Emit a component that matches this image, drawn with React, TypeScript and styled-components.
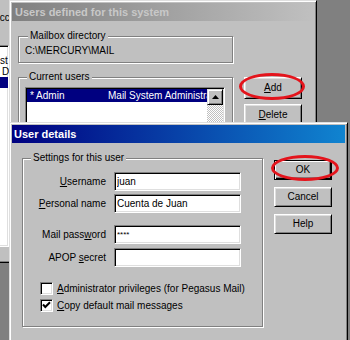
import styled, { createGlobalStyle } from "styled-components";

const GlobalStyle = createGlobalStyle`
  html, body {
    margin: 0;
    padding: 0;
    background: #808080;
  }
  #root {
    width: 350px;
    height: 340px;
  }
`;

const Desktop = styled.div`
  position: relative;
  width: 350px;
  height: 340px;
  overflow: hidden;
  background: #808080;
  font-family: "Liberation Sans", Arial, sans-serif;
  font-size: 10px;
  line-height: 12px;
  color: #000;
`;

const Window = styled.div<{ $x: number; $y: number; $w: number; $h: number }>`
  position: absolute;
  left: ${(p) => p.$x}px;
  top: ${(p) => p.$y}px;
  width: ${(p) => p.$w}px;
  height: ${(p) => p.$h}px;
  box-sizing: border-box;
  display: flex;
  flex-direction: column;
  padding: 2px;
  background: #c0c0c0;
  border: 1px solid;
  border-color: #dfdfdf #000 #000 #dfdfdf;
  box-shadow: inset 1px 1px #fff, inset -1px -1px #808080;
`;

const TitleBar = styled.div<{ $active?: boolean; $indent: number }>`
  flex: none;
  height: 18px;
  display: flex;
  align-items: center;
  padding-left: ${(p) => p.$indent}px;
  font-size: 11px;
  font-weight: bold;
  white-space: nowrap;
  color: ${(p) => (p.$active ? "#fff" : "#c8c8c8")};
  background: ${(p) =>
    p.$active
      ? "linear-gradient(90deg, #000080, #1084d0)"
      : "linear-gradient(90deg, #808080, #c0c0c0)"};
`;

const DialogBody = styled.div<{ $pad: string; $gap: number }>`
  display: flex;
  align-items: flex-start;
  gap: ${(p) => p.$gap}px;
  padding: ${(p) => p.$pad};
`;

const Column = styled.div<{ $w: number }>`
  display: flex;
  flex-direction: column;
  width: ${(p) => p.$w}px;
  flex: none;
`;

const ButtonColumn = styled.div<{ $top: number; $gap: number }>`
  display: flex;
  flex-direction: column;
  gap: ${(p) => p.$gap}px;
  padding-top: ${(p) => p.$top}px;
`;

const Group = styled.fieldset<{ $pad: string; $top?: number }>`
  margin: ${(p) => p.$top ?? 0}px 0 0 0;
  padding: ${(p) => p.$pad};
  min-width: 0;
  box-sizing: border-box;
  border: 1px solid #808080;
  box-shadow: inset 1px 1px #fff, 1px 1px #fff;
`;

const Legend = styled.legend<{ $offset: number }>`
  margin-left: ${(p) => p.$offset}px;
  padding: 0 2px;
  line-height: 12px;
  background: #c0c0c0;
`;

const PathText = styled.div`
  white-space: nowrap;
`;

const ListBox = styled.div`
  display: flex;
  height: 60px;
  box-sizing: border-box;
  padding: 1px;
  background: #fff;
  border: 1px solid;
  border-color: #808080 #fff #fff #808080;
  box-shadow: inset 1px 1px #000, inset -1px -1px #dfdfdf;
`;

const ListRows = styled.div`
  flex: 1;
  min-width: 0;
  overflow: hidden;
`;

const ListRow = styled.div<{ $selected?: boolean }>`
  display: grid;
  grid-template-columns: 81px 1fr;
  height: 13px;
  line-height: 13px;
  white-space: nowrap;
  overflow: hidden;
  background: ${(p) => (p.$selected ? "#000080" : "transparent")};
  color: ${(p) => (p.$selected ? "#fff" : "#000")};
`;

const ListCell = styled.span<{ $indent?: number }>`
  padding-left: ${(p) => p.$indent ?? 0}px;
  overflow: hidden;
`;

const ScrollBar = styled.div`
  width: 16px;
  flex: none;
  display: flex;
  flex-direction: column;
`;

const ScrollButton = styled.div`
  height: 16px;
  box-sizing: border-box;
  display: flex;
  align-items: center;
  justify-content: center;
  background: #c0c0c0;
  border: 1px solid;
  border-color: #dfdfdf #000 #000 #dfdfdf;
  box-shadow: inset 1px 1px #fff, inset -1px -1px #808080;
`;

const ScrollTrack = styled.div`
  flex: 1;
  background: repeating-conic-gradient(#fff 0 25%, #c0c0c0 0 50%) 0 0 / 2px 2px;
`;

const Button = styled.div<{ $h: number; $default?: boolean }>`
  position: relative;
  width: 58px;
  height: ${(p) => p.$h}px;
  box-sizing: border-box;
  display: flex;
  align-items: center;
  justify-content: center;
  background: #c0c0c0;
  border: 1px solid;
  border-color: ${(p) => (p.$default ? "#000" : "#fff #000 #000 #fff")};
  box-shadow: ${(p) =>
    p.$default
      ? "inset 1px 1px #fff, inset -1px -1px #000, inset -2px -2px #808080"
      : "inset 1px 1px #dfdfdf, inset -1px -1px #808080"};
  white-space: nowrap;
`;

const RedRing = styled.span<{ $l: number; $t: number; $r: number; $b: number }>`
  position: absolute;
  left: ${(p) => p.$l}px;
  top: ${(p) => p.$t}px;
  right: ${(p) => p.$r}px;
  bottom: ${(p) => p.$b}px;
  border: 3px solid #e4141c;
  border-radius: 50%;
  pointer-events: none;
`;

const FieldGrid = styled.div<{ $top: number; $gap: number }>`
  display: grid;
  grid-template-columns: 75px 127px;
  grid-auto-rows: 19px;
  column-gap: 8px;
  row-gap: ${(p) => p.$gap}px;
  margin-top: ${(p) => p.$top}px;
  align-items: center;
`;

const FieldLabel = styled.label`
  text-align: right;
  white-space: nowrap;
`;

const TextBox = styled.input<{ $masked?: boolean }>`
  width: 100%;
  height: 19px;
  box-sizing: border-box;
  margin: 0;
  padding: 0 2px;
  font: inherit;
  font-size: ${(p) => (p.$masked ? 8 : 10)}px;
  color: #000;
  background: #fff;
  outline: none;
  border: 1px solid;
  border-color: #808080 #fff #fff #808080;
  box-shadow: inset 1px 1px #000, inset -1px -1px #dfdfdf;
`;

const CheckList = styled.div`
  display: flex;
  flex-direction: column;
  gap: 4px;
  margin: 15px 0 0 9px;
`;

const CheckRow = styled.div`
  display: flex;
  align-items: center;
  gap: 4px;
  height: 13px;
  white-space: nowrap;
`;

const CheckBox = styled.span`
  width: 13px;
  height: 13px;
  flex: none;
  box-sizing: border-box;
  display: flex;
  align-items: center;
  justify-content: center;
  background: #fff;
  border: 1px solid;
  border-color: #808080 #fff #fff #808080;
  box-shadow: inset 1px 1px #000, inset -1px -1px #dfdfdf;
`;

const BackTop = styled.div`
  height: 44px;
  flex: none;
  box-sizing: border-box;
  padding: 11px 0 0 30px;
  white-space: nowrap;
`;

const BackList = styled.div`
  height: 202px;
  flex: none;
  box-sizing: border-box;
  padding-top: 9px;
  background: #fff;
  border: 1px solid;
  border-color: #808080 #fff #fff #808080;
  box-shadow: inset 1px 1px #000, inset -1px -1px #dfdfdf;
`;

const BackRow = styled.div<{ $indent: number; $selected?: boolean }>`
  height: 11px;
  line-height: 11px;
  padding-left: ${(p) => p.$indent}px;
  white-space: nowrap;
  background: ${(p) => (p.$selected ? "#000080" : "transparent")};
  color: ${(p) => (p.$selected ? "#fff" : "#000")};
`;

const UpArrow = () => (
  <svg width="7" height="4" viewBox="0 0 7 4">
    <path d="M3.5 0 L7 4 L0 4 Z" fill="#000" />
  </svg>
);

const Tick = () => (
  <svg width="9" height="9" viewBox="0 0 9 9">
    <path d="M1 3.5 L3.3 6 L8 1.2" fill="none" stroke="#000" strokeWidth="2" />
  </svg>
);

export default function App() {
  return (
    <Desktop>
      <GlobalStyle />

      <Window $x={-40} $y={-2} $w={52} $h={265}>
        <BackTop>Acc</BackTop>
        <BackList>
          <BackRow $indent={36}>st</BackRow>
          <BackRow $indent={38}>D</BackRow>
          <BackRow $indent={38} $selected>
            &nbsp;
          </BackRow>
        </BackList>
      </Window>

      <Window $x={9} $y={0} $w={308} $h={190}>
        <TitleBar $indent={3}>Users defined for this system</TitleBar>
        <DialogBody $pad="9px 0 0 6px" $gap={11}>
          <Column $w={215}>
            <Group $pad="3px 6px 5px 6px">
              <Legend $offset={3}>Mailbox directory</Legend>
              <PathText>C:\MERCURY\MAIL</PathText>
            </Group>
            <Group $pad="4px 7px 8px 6px" $top={8}>
              <Legend $offset={2}>Current users</Legend>
              <ListBox>
                <ListRows>
                  <ListRow $selected>
                    <ListCell $indent={3}>* Admin</ListCell>
                    <ListCell>Mail System Administrator</ListCell>
                  </ListRow>
                </ListRows>
                <ScrollBar>
                  <ScrollButton>
                    <UpArrow />
                  </ScrollButton>
                  <ScrollTrack />
                </ScrollBar>
              </ListBox>
            </Group>
          </Column>
          <ButtonColumn $top={47} $gap={5}>
            <Button $h={22}>
              <span>
                <u>A</u>dd
              </span>
              <RedRing $l={-6} $t={-5} $r={-4} $b={-2} />
            </Button>
            <Button $h={22}>
              <span>
                <u>D</u>elete
              </span>
            </Button>
          </ButtonColumn>
        </DialogBody>
      </Window>

      <Window $x={9} $y={122} $w={339} $h={230}>
        <TitleBar $active $indent={2}>
          User details
        </TitleBar>
        <DialogBody $pad="9px 0 0 10px" $gap={11}>
          <Column $w={241}>
            <Group $pad="8px 20px 14px 8px">
              <Legend $offset={0}>Settings for this user</Legend>
              <FieldGrid $top={0} $gap={3}>
                <FieldLabel>
                  <u>U</u>sername
                </FieldLabel>
                <TextBox readOnly defaultValue="juan" />
                <FieldLabel>
                  <u>P</u>ersonal name
                </FieldLabel>
                <TextBox readOnly defaultValue="Cuenta de Juan" />
              </FieldGrid>
              <FieldGrid $top={12} $gap={4}>
                <FieldLabel>
                  Mail pass<u>w</u>ord
                </FieldLabel>
                <TextBox readOnly $masked defaultValue="****" />
                <FieldLabel>
                  APOP <u>s</u>ecret
                </FieldLabel>
                <TextBox readOnly defaultValue="" />
              </FieldGrid>
              <CheckList>
                <CheckRow>
                  <CheckBox />
                  <span>
                    <u>A</u>dministrator privileges (for Pegasus Mail)
                  </span>
                </CheckRow>
                <CheckRow>
                  <CheckBox>
                    <Tick />
                  </CheckBox>
                  <span>
                    <u>C</u>opy default mail messages
                  </span>
                </CheckRow>
              </CheckList>
            </Group>
          </Column>
          <ButtonColumn $top={8} $gap={7}>
            <Button $h={20} $default>
              <span>OK</span>
              <RedRing $l={-4} $t={-6} $r={-8} $b={-2} />
            </Button>
            <Button $h={20}>
              <span>Cancel</span>
            </Button>
            <Button $h={20}>
              <span>Help</span>
            </Button>
          </ButtonColumn>
        </DialogBody>
      </Window>
    </Desktop>
  );
}
